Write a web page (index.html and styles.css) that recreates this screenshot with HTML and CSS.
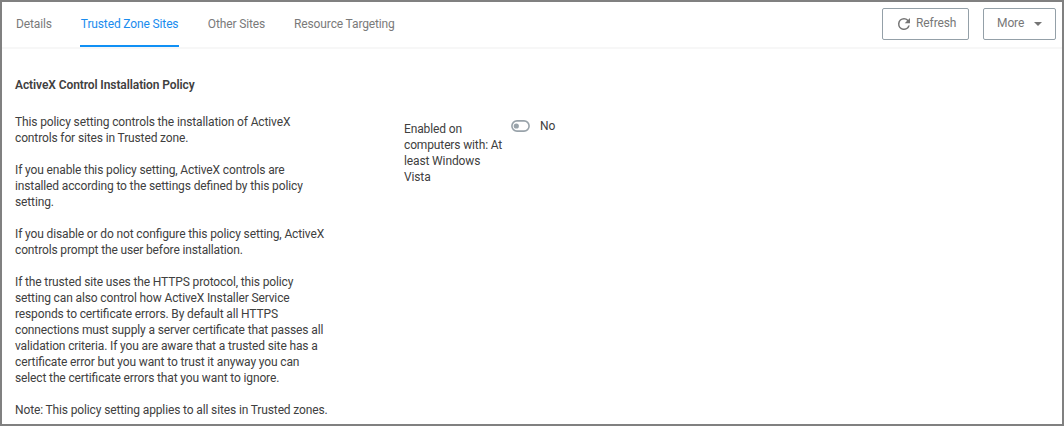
FILE: index.html
```html
<!DOCTYPE html>
<html lang="en">
<head>
<meta charset="utf-8">
<title>Trusted Zone Sites</title>
<link rel="stylesheet" href="styles.css">
</head>
<body>
<div class="window">
  <header class="topbar">
    <nav class="tabs">
      <a class="tab">Details</a>
      <a class="tab active">Trusted Zone Sites</a>
      <a class="tab">Other Sites</a>
      <a class="tab">Resource Targeting</a>
    </nav>
    <div class="actions">
      <button class="btn refresh"><svg class="refresh-icon" viewBox="0 0 24 24"><path d="M17.65 6.35A7.96 7.96 0 0 0 12 4a8 8 0 1 0 7.73 10h-2.08A6 6 0 1 1 12 6c1.66 0 3.14.69 4.22 1.78L13 11h7V4z"/></svg><span class="btn-text">Refresh</span></button>
      <button class="btn more"><span class="btn-text">More</span><svg class="caret" viewBox="0 0 8 4"><path d="M0 0h8L4 4z"/></svg></button>
    </div>
  </header>
  <main class="content">
    <h1 class="title">ActiveX Control Installation Policy</h1>
    <div class="row">
      <div class="description">
        <p>This policy setting controls the installation of ActiveX<br>controls for sites in Trusted zone.</p>
        <p>If you enable this policy setting, ActiveX controls are<br>installed according to the settings defined by this policy<br>setting.</p>
        <p>If you disable or do not configure this policy setting, ActiveX<br>controls prompt the user before installation.</p>
        <p>If the trusted site uses the HTTPS protocol, this policy<br>setting can also control how ActiveX Installer Service<br>responds to certificate errors. By default all HTTPS<br>connections must supply a server certificate that passes all<br>validation criteria. If you are aware that a trusted site has a<br>certificate error but you want to trust it anyway you can<br>select the certificate errors that you want to ignore.</p>
        <p>Note: This policy setting applies to all sites in Trusted zones.</p>
      </div>
      <div class="label">Enabled on<br>computers with: At<br>least Windows<br>Vista</div>
      <div class="switch"><svg class="toggle" viewBox="0 0 19 12"><rect class="track" x=".9" y=".9" width="17.2" height="10.2" rx="5.1"/><circle class="knob" cx="5.3" cy="6" r="2.6"/></svg><span>No</span></div>
    </div>
  </main>
</div>
</body>
</html>
```

FILE: styles.css
```css
* { box-sizing: border-box; }
body { margin: 0; }
.window {
  width: 1064px;
  height: 426px;
  border: 2px solid #808080;
  background: #fff;
  color: #404040;
  font: 12px/16px Roboto, sans-serif;
  letter-spacing: -0.133px;
  font-feature-settings: "liga" 1;
  overflow: hidden;
}
.topbar {
  display: flex;
  justify-content: space-between;
  height: 47px;
  padding: 0 6px 0 14px;
  border-bottom: 2px solid #f7f7f7;
}
.tabs { display: flex; gap: 29px; }
.tab { height: 45px; padding-top: 14px; color: #7a7a7a; white-space: nowrap; }
.tab.active { width: 99px; padding-left: 1px; margin-left: -1px; color: #1a8cee; border-bottom: 2px solid #1090f5; }
.actions { display: flex; gap: 14px; padding-top: 6px; }
.btn {
  display: flex;
  align-items: center;
  height: 32px;
  padding: 0;
  border: 1px solid #94a0a8;
  border-radius: 2px;
  background: #fff;
  color: #777;
  font: 12px/16px Roboto, sans-serif;
  letter-spacing: -0.1px;
}
.btn-text { padding-bottom: 2px; }
.refresh { width: 87px; padding-left: 12px; gap: 3px; }
.more { width: 73px; padding-left: 13px; gap: 10px; }
.refresh-icon { width: 18px; height: 18px; fill: #757575; }
.caret { width: 8px; height: 4px; fill: #757575; }
.content { padding: 28px 13px 0; }
.title { margin: 0 0 21px; font-size: 12px; line-height: 16px; font-weight: 600; letter-spacing: -0.09px; }
.row { display: flex; align-items: flex-start; }
.description { width: 389px; white-space: nowrap; }
.description p { margin: 0 0 16px; }
.label { width: 107px; padding-top: 7px; white-space: nowrap; }
.switch { display: flex; align-items: center; gap: 10px; padding-top: 4px; }
.toggle { width: 19px; height: 12px; }
.track { fill: none; stroke: #99a3aa; stroke-width: 1.6; }
.knob { fill: #99a3aa; }
```
